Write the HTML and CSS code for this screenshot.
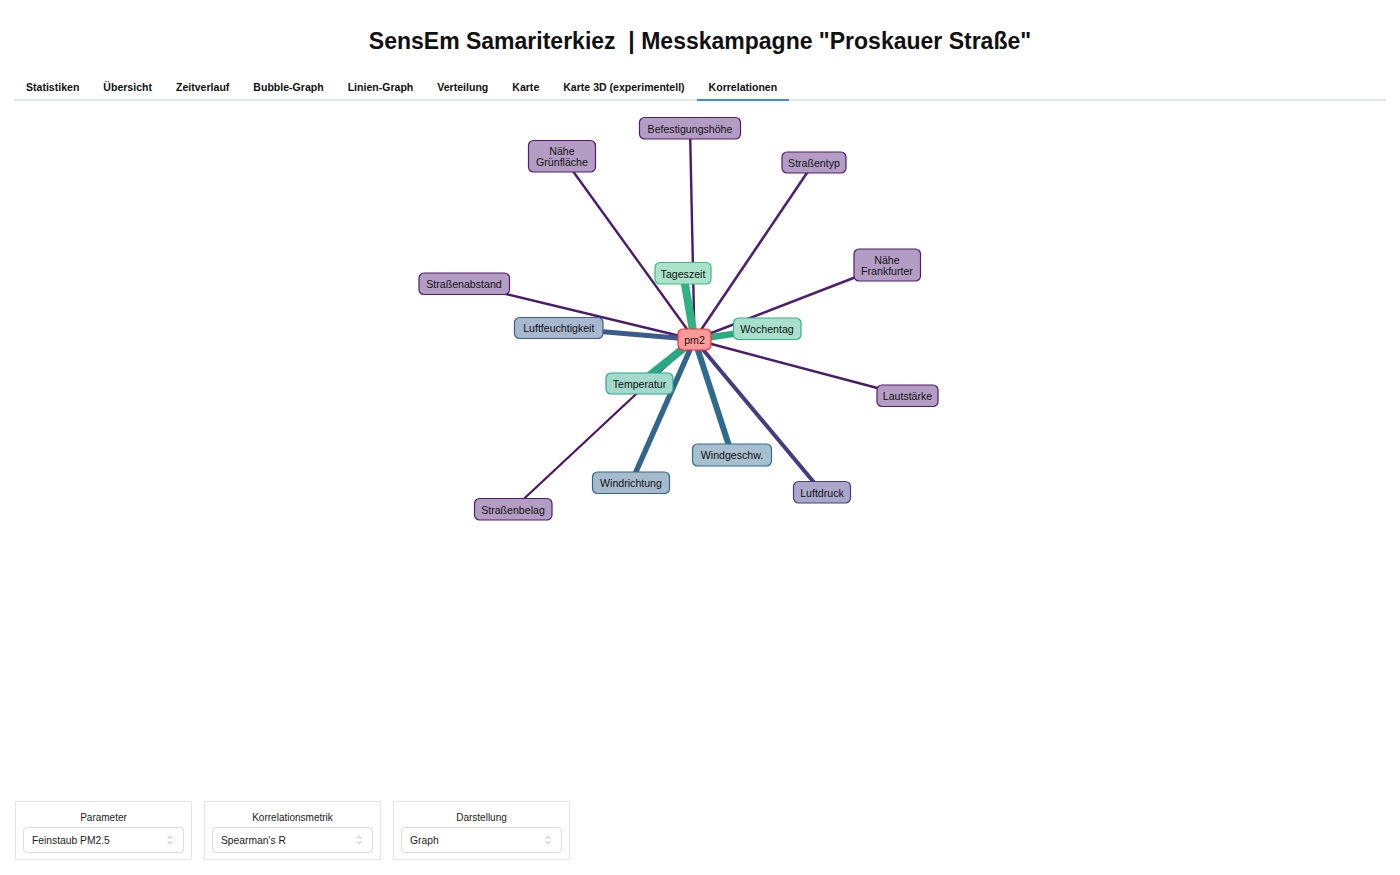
FILE: index.html
```html
<!DOCTYPE html>
<html lang="de">
<head>
<meta charset="utf-8">
<title>SensEm Samariterkiez</title>
<link rel="stylesheet" href="styles.css">
</head>
<body>
<div class="page">
  <h1 class="title">SensEm Samariterkiez  | Messkampagne "Proskauer Straße"</h1>
  <nav class="tabs">
    <span class="tab">Statistiken</span>
    <span class="tab">Übersicht</span>
    <span class="tab">Zeitverlauf</span>
    <span class="tab">Bubble-Graph</span>
    <span class="tab">Linien-Graph</span>
    <span class="tab">Verteilung</span>
    <span class="tab">Karte</span>
    <span class="tab">Karte 3D (experimentell)</span>
    <span class="tab active">Korrelationen</span>
  </nav>
  <svg class="graph" viewBox="14 101 1372 700" xmlns="http://www.w3.org/2000/svg">
    <g class="edges" fill="none" stroke-linecap="butt">
      <line x1="694.5" y1="339.5" x2="690" y2="128" stroke="#4b1a6b" stroke-width="2.4"/>
      <line x1="694.5" y1="339.5" x2="562" y2="156" stroke="#4b1a6b" stroke-width="2.4"/>
      <line x1="694.5" y1="339.5" x2="814" y2="162.5" stroke="#4e1f72" stroke-width="2.6"/>
      <line x1="694.5" y1="339.5" x2="887" y2="265" stroke="#4e1f72" stroke-width="2.6"/>
      <line x1="694.5" y1="339.5" x2="464" y2="284" stroke="#4b1a6b" stroke-width="2.4"/>
      <line x1="694.5" y1="339.5" x2="907.5" y2="396" stroke="#4b1a6b" stroke-width="2.4"/>
      <line x1="694.5" y1="339.5" x2="513" y2="509" stroke="#4b1466" stroke-width="2.2"/>
      <line x1="694.5" y1="339.5" x2="822" y2="492" stroke="#463b82" stroke-width="4"/>
      <line x1="694.5" y1="339.5" x2="559" y2="328" stroke="#3b5b8d" stroke-width="5"/>
      <line x1="694.5" y1="339.5" x2="631" y2="483" stroke="#33648c" stroke-width="5.5"/>
      <line x1="694.5" y1="339.5" x2="732" y2="455" stroke="#2f6b8d" stroke-width="6"/>
      <line x1="694.5" y1="339.5" x2="767" y2="329" stroke="#2bab82" stroke-width="6.5"/>
      <line x1="694.5" y1="339.5" x2="639.5" y2="383.5" stroke="#27a783" stroke-width="8"/>
      <line x1="694.5" y1="339.5" x2="683" y2="273" stroke="#2fb382" stroke-width="8"/>
    </g>
    <g class="nodes">
      <g class="node purple">
        <rect x="639.5" y="117.5" width="101" height="21.5" rx="5"/>
        <text x="690" y="128.5">Befestigungshöhe</text>
      </g>
      <g class="node purple">
        <rect x="528.5" y="140.5" width="67" height="31.5" rx="5"/>
        <text x="562" y="150.5">Nähe</text>
        <text x="562" y="161.5">Grünfläche</text>
      </g>
      <g class="node purple">
        <rect x="782" y="152" width="64" height="21" rx="5"/>
        <text x="814" y="162.7">Straßentyp</text>
      </g>
      <g class="node purple">
        <rect x="854" y="249" width="66.5" height="32" rx="5"/>
        <text x="887" y="259.5">Nähe</text>
        <text x="887" y="270.5">Frankfurter</text>
      </g>
      <g class="node purple">
        <rect x="419" y="273" width="90.5" height="21.5" rx="5"/>
        <text x="464" y="284">Straßenabstand</text>
      </g>
      <g class="node green1">
        <rect x="655" y="262.5" width="56" height="21.5" rx="5"/>
        <text x="683" y="273.5">Tageszeit</text>
      </g>
      <g class="node blue1">
        <rect x="514.5" y="317.5" width="88.5" height="21" rx="5"/>
        <text x="558.8" y="328">Luftfeuchtigkeit</text>
      </g>
      <g class="node green2">
        <rect x="733.5" y="318" width="67.5" height="21.5" rx="5"/>
        <text x="767" y="329">Wochentag</text>
      </g>
      <g class="node green3">
        <rect x="606" y="373" width="67" height="21" rx="5"/>
        <text x="639.5" y="383.5">Temperatur</text>
      </g>
      <g class="node purple">
        <rect x="877" y="385" width="61" height="21.5" rx="5"/>
        <text x="907.5" y="396">Lautstärke</text>
      </g>
      <g class="node blue3">
        <rect x="692.5" y="444" width="79" height="22" rx="5"/>
        <text x="732" y="455.3">Windgeschw.</text>
      </g>
      <g class="node blue2">
        <rect x="592.5" y="472" width="77" height="21.5" rx="5"/>
        <text x="631" y="483">Windrichtung</text>
      </g>
      <g class="node indigo">
        <rect x="793.5" y="481.5" width="57" height="21.5" rx="5"/>
        <text x="822" y="492.5">Luftdruck</text>
      </g>
      <g class="node purple">
        <rect x="474.5" y="498.5" width="77.5" height="21.5" rx="5"/>
        <text x="513" y="509.5">Straßenbelag</text>
      </g>
      <g class="node target">
        <rect x="678" y="329" width="33" height="21" rx="5"/>
        <text x="694.5" y="339.8">pm2</text>
      </g>
    </g>
  </svg>
  <div class="controls">
    <div class="control">
      <div class="control-label">Parameter</div>
      <div class="select">
        <span class="select-value">Feinstaub PM2.5</span>
        <svg class="chevron" viewBox="0 0 6 10" width="6" height="10"><path d="M0.8 3.6 L3 1.4 L5.2 3.6 M0.8 6.4 L3 8.6 L5.2 6.4" fill="none" stroke="#9a9a9a" stroke-width="0.8"/></svg>
      </div>
    </div>
    <div class="control">
      <div class="control-label">Korrelationsmetrik</div>
      <div class="select">
        <span class="select-value">Spearman's R</span>
        <svg class="chevron" viewBox="0 0 6 10" width="6" height="10"><path d="M0.8 3.6 L3 1.4 L5.2 3.6 M0.8 6.4 L3 8.6 L5.2 6.4" fill="none" stroke="#9a9a9a" stroke-width="0.8"/></svg>
      </div>
    </div>
    <div class="control">
      <div class="control-label">Darstellung</div>
      <div class="select">
        <span class="select-value">Graph</span>
        <svg class="chevron" viewBox="0 0 6 10" width="6" height="10"><path d="M0.8 3.6 L3 1.4 L5.2 3.6 M0.8 6.4 L3 8.6 L5.2 6.4" fill="none" stroke="#9a9a9a" stroke-width="0.8"/></svg>
      </div>
    </div>
  </div>
</div>
</body>
</html>
```
FILE: styles.css
```css
* { box-sizing: border-box; }
html, body {
  margin: 0;
  padding: 0;
  background: #ffffff;
}
body {
  font-family: "Liberation Sans", Arial, sans-serif;
  color: #111;
}
.page {
  width: 1400px;
  height: 875px;
  padding: 0 14px 15px 14px;
  display: flex;
  flex-direction: column;
}
.title {
  margin: 0;
  padding-top: 26px;
  font-size: 23px;
  line-height: 30px;
  font-weight: bold;
  text-align: center;
  white-space: pre;
  color: #111;
}
.tabs {
  margin-top: 13px;
  display: flex;
  border-bottom: 2px solid #e3e6ea;
}
.tab {
  padding: 11px 12px 5px 12px;
  font-size: 10.55px;
  line-height: 14px;
  font-weight: bold;
  color: #111;
  border-bottom: 2px solid transparent;
  margin-bottom: -2px;
}
.tab.active {
  border-bottom-color: #3b8fe0;
}
.graph {
  display: block;
  width: 1372px;
  height: 700px;
  flex: none;
}
.node rect {
  stroke-width: 1.2;
}
.node text {
  font-family: "Liberation Sans", Arial, sans-serif;
  font-size: 10.6px;
  fill: #111;
  text-anchor: middle;
  dominant-baseline: central;
}
.purple rect { fill: #b49dc4; stroke: #4f1d6b; }
.blue1 rect { fill: #a8b8d0; stroke: #3f5c8c; }
.blue2 rect { fill: #a6bacd; stroke: #35668c; }
.blue3 rect { fill: #a7bfce; stroke: #2f6c8c; }
.indigo rect { fill: #aba6cb; stroke: #473c85; }
.green1 rect { fill: #aae3c9; stroke: #3cba86; }
.green2 rect { fill: #a8e0cc; stroke: #33b28a; }
.green3 rect { fill: #a3d9cb; stroke: #2ba88d; }
.target rect { fill: #ff9a9a; stroke: #ff2a2a; }
.controls {
  display: flex;
  gap: 12px;
  padding-left: 1px;
}
.control {
  width: 177px;
  height: 59px;
  border: 1px solid #e6e6e6;
  padding: 10px 7px 6px 7px;
}
.control-label {
  font-size: 10px;
  line-height: 12px;
  text-align: center;
  color: #222;
  margin-bottom: 3px;
}
.select {
  height: 26px;
  border: 1px solid #dcdcdc;
  border-radius: 4px;
  padding: 0 10px 0 8px;
  display: flex;
  align-items: center;
  justify-content: space-between;
}
.select-value {
  font-size: 10.3px;
  color: #222;
}
.chevron {
  display: block;
}
```
